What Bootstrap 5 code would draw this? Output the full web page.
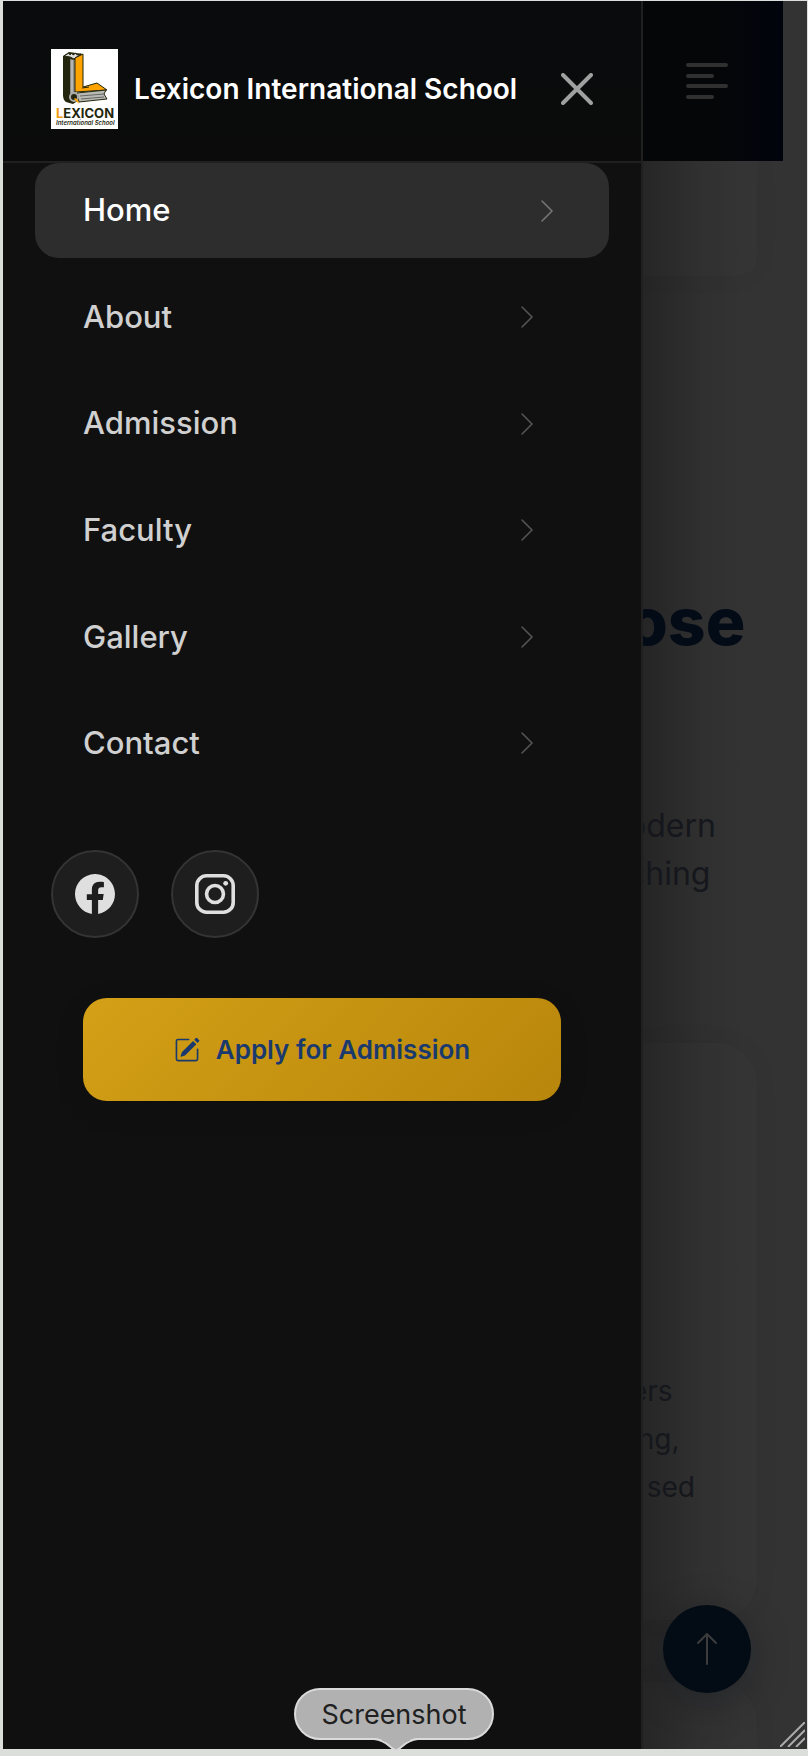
<!DOCTYPE html>
<html lang="en">
<head>
    <meta charset="UTF-8">
    <meta name="viewport" content="width=device-width, initial-scale=1.0">
    <title>Lexicon International School</title>
    <!-- Bootstrap CSS -->
    <link href="https://cdn.jsdelivr.net/npm/bootstrap@5.3.0/dist/css/bootstrap.min.css" rel="stylesheet">
    <style>
        body {
            font-family: Inter, "Liberation Sans", sans-serif;
            background: #dcdedc;
            padding: 1px 1px 7px 3px;
        }
        .device {
            min-height: calc(100vh - 8px);
            background: #333;
        }

        /* Drawer */
        .drawer {
            width: 79.6%;
            background: #101010;
            border-right: 2px solid #202020;
            z-index: 2;
        }
        .drawer-top {
            height: 162px;
            padding: 16px 48px 0;
            background: linear-gradient(#090b0c, #0b0b0b);
            border-bottom: 2px solid #202020;
        }
        .brand {
            gap: 16px;
            font-size: 28px;
            font-weight: 600;
            color: #fff;
        }
        .drawer-close {
            color: #a0a0a0;
            line-height: 0;
        }
        .menu {
            height: 628px;
            padding: 0 32px;
        }
        .menu-link {
            height: 95px;
            padding: 0 75px 0 48px;
            border-radius: 24px;
            font-size: 31px;
            font-weight: 500;
            color: #d0d0d0;
            text-decoration: none;
        }
        .menu-link svg { color: #555; }
        .menu-link.active {
            padding-right: 55px;
            background: #2d2d2d;
            color: #fff;
        }
        .menu-link.active svg { color: #777; }
        .socials {
            gap: 32px;
            padding: 59px 48px 0;
        }
        .social-link {
            width: 88px;
            height: 88px;
            background: #1e1e1e;
            border: 2px solid #343434;
            color: #dfdfdf;
        }
        .apply-wrap { padding: 60px 80px 0; }
        .apply {
            height: 103px;
            gap: 16px;
            border: 0;
            border-radius: 24px;
            background: linear-gradient(135deg, #d4a017, #b8860b);
            color: #1a3a6e;
            font-size: 26px;
            font-weight: 600;
            box-shadow: 0 8px 30px rgba(0, 0, 0, .1);
        }
        .tip {
            left: 291px;
            bottom: -3px;
            font-size: 27px;
            line-height: 1;
            color: #202020;
        }
        .tip-label {
            width: 200px;
            height: 52px;
            background: #b1b1b1;
            border: 2px solid #dadada;
            border-radius: 26px;
        }
        .tip-tail {
            display: block;
            margin: -2px 0 0 80px;
        }

        /* Dimmed page behind the drawer */
        .site {
            background: linear-gradient(90deg, #252525, #2f2f2f 56px, #333 100px);
        }
        .site-nav {
            height: 160px;
            margin-right: 24px;
            padding-right: 55px;
            background: linear-gradient(90deg, #050608 50%, #01040d);
            color: #303030;
            z-index: 1;
        }
        .panel {
            margin-right: 50px;
            background: rgba(255, 255, 255, .008);
            box-shadow: 0 0 24px rgba(0, 0, 0, .06);
        }
        .panel-first {
            height: 115px;
            border-radius: 0 0 20px 0;
        }
        .panel-main {
            height: 577px;
            padding-top: 324px;
            border-radius: 0 40px 40px 0;
        }
        .panel-last {
            height: 67px;
            margin-top: 62px;
            border-radius: 0 40px 0 0;
        }
        .cut {
            margin-left: -16px;
            white-space: nowrap;
        }
        .site-title {
            padding-top: 305px;
            margin-bottom: 0;
            font-size: 66px;
            line-height: 80px;
            font-weight: 800;
            color: #030b17;
        }
        .site-lead {
            margin-bottom: 0;
            padding-top: 141px;
            height: 382px;
            font-size: 32px;
            line-height: 48px;
            color: #15171c;
        }
        .panel-text {
            margin-left: -12px;
            font-size: 28px;
            line-height: 48px;
            color: #15171c;
        }
        .to-top {
            right: 56px;
            bottom: 56px;
            width: 88px;
            height: 88px;
            background: #030b15;
            border: 0;
            color: #3c3c3c;
            box-shadow: 0 8px 40px rgba(3, 11, 23, .3);
            z-index: 1;
        }
        .grip {
            right: 2px;
            bottom: 2px;
        }
    </style>
</head>
<body>
<div class="device d-flex position-relative">
    <aside class="drawer position-relative flex-shrink-0">
        <div class="drawer-top d-flex align-items-center justify-content-between">
            <div class="brand d-flex align-items-center">
                <svg width="67" height="80" viewBox="0 0 67 80" role="img" aria-label="Lexicon logo">
                    <rect width="67" height="80" fill="#fff"/>
                    <path d="M12 7l6-4 14 2-8 4v34l4 8-6 4-7-2q-3-2-3-7z" fill="#23260c"/>
                    <path d="M13 7l5-3 1 2 2-2 1 2 3-2 1 2 4-1-7 5-4-2z" fill="#ddd" stroke="#23260c"/>
                    <path d="M19 10l5 1v33l-5 4z" fill="#8c8c86"/>
                    <path d="M21 11v33" stroke="#ddd"/>
                    <path d="M24 9l8-4v33l14-4 10 7-32 2z" fill="#ffa300" stroke="#23260c"/>
                    <path d="M31 39l7-1" stroke="#23260c"/>
                    <path d="M26 44l29-3-2 4 3 5-28 3z" fill="#b9b9b4" stroke="#23260c"/>
                    <path d="M29 47l24-2M30 50l23-2" stroke="#666"/>
                    <circle cx="23" cy="48" r="4" fill="#23260c" stroke="#aaa" stroke-width="2"/>
                    <path d="M23 50l5 5-1-4-3-2z" fill="#ffa300"/>
                    <text x="5" y="69" font-family="Inter, sans-serif" font-size="13" font-weight="700" fill="#23260c"><tspan fill="#f29a10">L</tspan>EXICON</text>
                    <text x="5" y="76" font-family="Inter, sans-serif" font-size="6" font-style="italic" font-weight="600" fill="#23260c">International School</text>
                </svg>
                <span class="text-nowrap">Lexicon International School</span>
            </div>
            <button type="button" class="drawer-close btn p-0 border-0" aria-label="Close">
                <svg width="32" height="32" viewBox="0 0 32 32" fill="none" stroke="currentColor" stroke-width="4" stroke-linecap="round"><path d="M2 2l28 28M30 2L2 30"/></svg>
            </button>
        </div>

        <nav class="menu d-flex flex-column justify-content-between">
            <a href="#" class="menu-link active d-flex align-items-center justify-content-between">Home
                <svg width="14" height="24" viewBox="0 0 14 24" fill="none" stroke="currentColor" stroke-width="1.5" stroke-linecap="round"><path d="M2 2l10 10L2 22"/></svg></a>
            <a href="#" class="menu-link d-flex align-items-center justify-content-between">About
                <svg width="14" height="24" viewBox="0 0 14 24" fill="none" stroke="currentColor" stroke-width="1.5" stroke-linecap="round"><path d="M2 2l10 10L2 22"/></svg></a>
            <a href="#" class="menu-link d-flex align-items-center justify-content-between">Admission
                <svg width="14" height="24" viewBox="0 0 14 24" fill="none" stroke="currentColor" stroke-width="1.5" stroke-linecap="round"><path d="M2 2l10 10L2 22"/></svg></a>
            <a href="#" class="menu-link d-flex align-items-center justify-content-between">Faculty
                <svg width="14" height="24" viewBox="0 0 14 24" fill="none" stroke="currentColor" stroke-width="1.5" stroke-linecap="round"><path d="M2 2l10 10L2 22"/></svg></a>
            <a href="#" class="menu-link d-flex align-items-center justify-content-between">Gallery
                <svg width="14" height="24" viewBox="0 0 14 24" fill="none" stroke="currentColor" stroke-width="1.5" stroke-linecap="round"><path d="M2 2l10 10L2 22"/></svg></a>
            <a href="#" class="menu-link d-flex align-items-center justify-content-between">Contact
                <svg width="14" height="24" viewBox="0 0 14 24" fill="none" stroke="currentColor" stroke-width="1.5" stroke-linecap="round"><path d="M2 2l10 10L2 22"/></svg></a>
        </nav>

        <div class="socials d-flex">
            <a href="#" class="social-link rounded-circle d-flex align-items-center justify-content-center" aria-label="Facebook">
                <svg width="40" height="40" viewBox="0 0 16 16" fill="currentColor"><path d="M16 8.049c0-4.446-3.582-8.05-8-8.05C3.58 0-.002 3.603-.002 8.05c0 4.017 2.926 7.347 6.75 7.951v-5.625h-2.03V8.05H6.75V6.275c0-2.017 1.195-3.131 3.022-3.131.876 0 1.791.157 1.791.157v1.98h-1.009c-.993 0-1.303.621-1.303 1.258v1.51h2.218l-.354 2.326H9.25V16c3.824-.604 6.75-3.934 6.75-7.951"/></svg>
            </a>
            <a href="#" class="social-link rounded-circle d-flex align-items-center justify-content-center" aria-label="Instagram">
                <svg width="40" height="40" viewBox="0 0 16 16"><rect x=".72" y=".72" width="14.56" height="14.56" rx="3.9" fill="none" stroke="currentColor" stroke-width="1.44"/><circle cx="8" cy="8" r="3.38" fill="none" stroke="currentColor" stroke-width="1.44"/><circle cx="12.27" cy="3.73" r=".96" fill="currentColor"/></svg>
            </a>
        </div>

        <div class="apply-wrap">
            <button type="button" class="apply w-100 d-flex align-items-center justify-content-center">
                <svg width="26" height="26" viewBox="0 0 16 16" fill="currentColor"><path d="M15.502 1.94a.5.5 0 0 1 0 .706L14.459 3.69l-2-2L13.502.646a.5.5 0 0 1 .707 0l1.293 1.293zm-1.75 2.456-2-2L4.939 9.21a.5.5 0 0 0-.121.196l-.805 2.414a.25.25 0 0 0 .316.316l2.414-.805a.5.5 0 0 0 .196-.12l6.813-6.814z"/><path fill-rule="evenodd" d="M1 13.5A1.5 1.5 0 0 0 2.5 15h11a1.5 1.5 0 0 0 1.5-1.5v-6a.5.5 0 0 0-1 0v6a.5.5 0 0 1-.5.5h-11a.5.5 0 0 1-.5-.5v-11a.5.5 0 0 1 .5-.5H9a.5.5 0 0 0 0-1H2.5A1.5 1.5 0 0 0 1 2.5z"/></svg>
                Apply for Admission
            </button>
        </div>

        <div class="tip position-absolute" role="tooltip">
            <div class="tip-label d-flex align-items-center justify-content-center">Screenshot</div>
            <svg class="tip-tail" width="44" height="14" viewBox="0 0 44 14"><path d="M0 0C14 1 17 12 22 12S30 1 44 0z" fill="#b1b1b1"/><path d="M0 1C14 2 17 12 22 12S30 2 44 1" fill="none" stroke="#dadada" stroke-width="2"/></svg>
        </div>
    </aside>

    <main class="site flex-fill overflow-hidden">
        <header class="site-nav d-flex align-items-center justify-content-end position-relative">
            <svg width="42" height="38" viewBox="0 0 42 38" stroke="currentColor" stroke-width="4" stroke-linecap="round"><path d="M2 3h38M2 14h24M2 24h38M2 35h24"/></svg>
        </header>
        <section class="panel panel-first"></section>
        <h2 class="site-title cut">ose</h2>
        <p class="site-lead cut">odern<br>ching</p>
        <section class="panel panel-main">
            <p class="panel-text text-nowrap">ers<br>ing,<br>&nbsp; sed</p>
        </section>
        <section class="panel panel-last"></section>
    </main>

    <button type="button" class="to-top position-absolute rounded-circle d-flex align-items-center justify-content-center" aria-label="Back to top">
        <svg width="22" height="34" viewBox="0 0 22 34" fill="none" stroke="currentColor" stroke-width="2" stroke-linecap="round" stroke-linejoin="round"><path d="M11 32V2M2 11l9-9 9 9"/></svg>
    </button>
    <svg class="grip position-absolute" width="25" height="25" viewBox="0 0 25 25" stroke="#aaa" stroke-width="2"><path d="M0 25L25 0M8 25L25 8M16 25l9-9"/></svg>
</div>
<!-- Bootstrap JS -->
<script src="https://cdn.jsdelivr.net/npm/bootstrap@5.3.0/dist/js/bootstrap.bundle.min.js"></script>
</body>
</html>
